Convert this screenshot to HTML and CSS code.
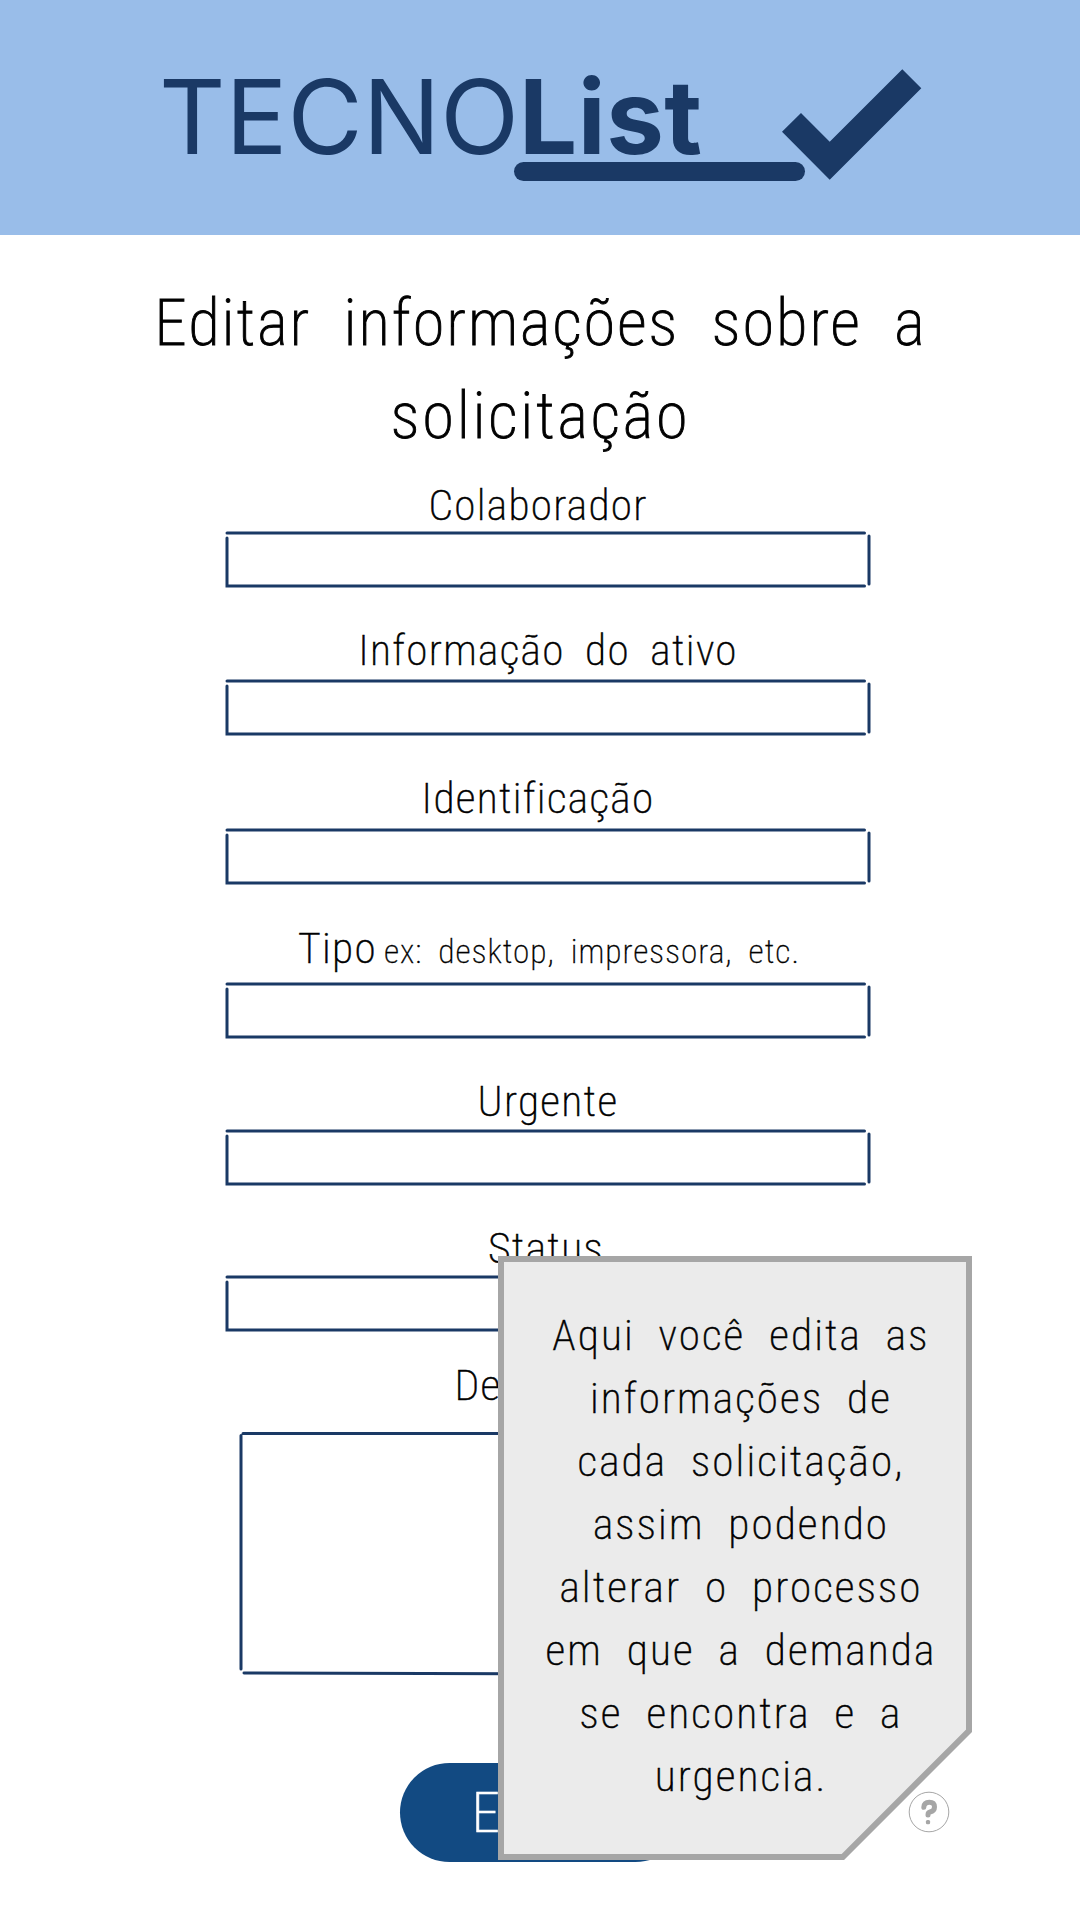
FILE: index.html
```html
<!DOCTYPE html>
<html lang="pt-BR">
<head>
<meta charset="utf-8">
<title>TECNOList</title>
<link rel="stylesheet" href="styles.css">
</head>
<body>
<svg class="defs" width="0" height="0" aria-hidden="true">
  <symbol id="box" viewBox="0 0 646 58">
    <path d="M2 2H639.5M644 5V53M639.5 55H2V7"/>
  </symbol>
</svg>
<header class="header">
  <div class="wordmark">TECNO<b>List</b></div>
  <svg class="check" width="140" height="111" viewBox="0 0 140 111"><path d="M120.3.3l19 19L47.7 110.7 0 62.7 19 44 47.7 72.7z"/></svg>
</header>
<main class="page">
  <h1 class="title">Editar informações sobre a<br><span class="wide">solicitação</span></h1>
  <form class="form">
    <div class="field colaborador"><label>Colaborador</label><svg class="box"><use href="#box"/></svg></div>
    <div class="field ativo"><label>Informação do ativo</label><svg class="box"><use href="#box"/></svg></div>
    <div class="field identificacao"><label>Identificação</label><svg class="box"><use href="#box"/></svg></div>
    <div class="field tipo"><label>Tipo<small>ex: desktop, impressora, etc.</small></label><svg class="box"><use href="#box"/></svg></div>
    <div class="field urgente"><label>Urgente</label><svg class="box"><use href="#box"/></svg></div>
    <div class="field status"><label>Status</label><svg class="box"><use href="#box"/></svg></div>
    <div class="field descricao"><label>Descrição</label><svg class="area" viewBox="0 0 618 246"><path d="M4 2.5H614.500M616.500 5V240M614.500 244L5 242M2 238V4.500"/></svg></div>
    <button class="submit" type="button">Editar</button>
  </form>
</main>
<aside class="note">
  <svg class="note-shape" viewBox="0 0 474 604"><path d="M3 3H471V474.800L344.800 601H3z"/></svg>
  <p>Aqui você edita as<br>informações de<br>cada solicitação,<br>assim podendo<br>alterar o processo<br>em que a demanda<br>se encontra e a<br>urgencia.</p>
</aside>
<svg class="help" width="42" height="42" viewBox="0 0 42 42">
  <circle cx="21" cy="21" r="19.800"/>
  <path d="M15.800 16.300Q16 11.200 21.300 11.200Q26.500 11.200 26.500 16Q26.500 20 22 21Q20 21.400 20 24"/>
  <rect x="17.900" y="29" width="4.200" height="4.200" rx="1.500"/>
</svg>
</body>
</html>
```
FILE: styles.css
```css
* { box-sizing: border-box; }
body {
  position: relative;
  width: 1080px;
  height: 1920px;
  margin: 0;
  overflow: hidden;
  background: #fff;
  color: #000;
  font-family: "Roboto Condensed", Roboto, sans-serif;
  font-stretch: 75%;
  font-weight: 200;
}
.defs { position: absolute; }

.header {
  display: flex;
  height: 235px;
  padding-left: 159px;
  background: #99bde9;
  color: #1a3965;
}
.wordmark {
  position: relative;
  width: 623px;
  margin-top: 65px;
  font: 400 103px/103px Inter, sans-serif;
}
.wordmark b { font-weight: 700; letter-spacing: .500px; }
.wordmark::after {
  content: "";
  position: absolute;
  left: 355px;
  top: 97px;
  width: 291px;
  height: 19px;
  border-radius: 10px;
  background: #1a3965;
}
.check { margin-top: 69px; fill: #1a3965; }

.title {
  margin: 0;
  padding: 42px 0 0 1px;
  font-size: 65px;
  font-weight: 200;
  line-height: 93px;
  letter-spacing: 1.900px;
  word-spacing: 16px;
  text-align: center;
  -webkit-text-stroke: .900px #000;
}
.wide { letter-spacing: 2.700px; }

.form {
  display: grid;
  grid-template-rows: 125.500px 148px 149.300px 154.300px 147.300px 145.300px 344.400px;
  justify-items: center;
}
.field {
  display: flex;
  flex-direction: column;
  justify-content: flex-end;
  align-items: center;
  width: 646px;
  margin-left: 16px;
}
.field label {
  position: relative;
  font-size: 43.400px;
  line-height: 50px;
  letter-spacing: 1.300px;
  word-spacing: 9.500px;
  white-space: nowrap;
  -webkit-text-stroke: .500px #000;
}
.field small { margin-left: 7px; font-size: 33.500px; letter-spacing: .950px; word-spacing: 7.500px; -webkit-text-stroke: .300px #000; }
.box { width: 646px; height: 58px; }
.box, .area { flex: none; fill: none; stroke: #1a3965; stroke-width: 3; stroke-linecap: round; }
.area { width: 618px; height: 246px; }
.colaborador label { margin: 0 20px 0 0; }
.ativo label { margin: 0 0 3px; }
.identificacao label { margin: 0 20px 4px 0; }
.tipo label { margin: 0 0 5px 2px; }
.urgente label { margin: 0 0 2px; }
.status label { margin: 0 4px 1px 0; }
.descricao label { margin: 0 9px 20px 0; }

.submit {
  width: 285px;
  height: 99px;
  margin: 86px 0 0 4px;
  padding: 0 3px 0 0;
  border: 0;
  border-radius: 50px;
  background: #124a82;
  color: #fff;
  font: inherit;
  font-size: 56px;
  letter-spacing: 2px;
  -webkit-text-stroke: .700px #fff;
}

.note {
  position: absolute;
  left: 498px;
  top: 1256px;
  width: 474px;
  height: 604px;
}
.note-shape {
  position: absolute;
  inset: 0;
  fill: #ebebeb;
  stroke: #a6a6a6;
  stroke-width: 6;
}
.note p {
  position: relative;
  margin: 47.500px 0 0 12px;
  font-size: 43.400px;
  line-height: 63.060px;
  letter-spacing: 2.100px;
  word-spacing: 12px;
  text-align: center;
  white-space: nowrap;
  -webkit-text-stroke: .500px #000;
}

.help { position: absolute; left: 908px; top: 1791px; fill: none; stroke: #a6a6a6; }
.help path { stroke-width: 5; stroke-linecap: round; stroke-linejoin: round; }
.help rect { fill: #a6a6a6; stroke: none; }
```
